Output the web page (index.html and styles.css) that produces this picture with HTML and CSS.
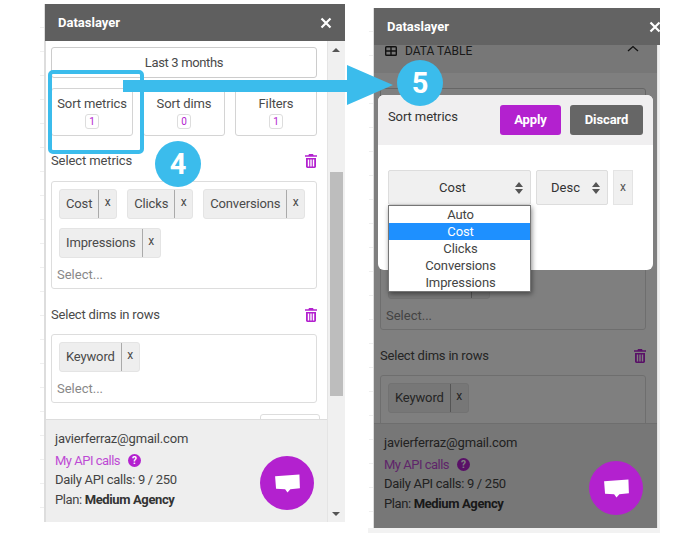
FILE: index.html
```html
<!DOCTYPE html>
<html lang="en">
<head>
<meta charset="utf-8">
<title>Dataslayer sort metrics</title>
<link rel="stylesheet" href="styles.css">
</head>
<body>
<div class="canvas">
  <div class="edge edge-left"></div>
  <div class="edge edge-right"></div>
  <div class="floor"></div>

  <section class="win win-left">
    <header class="win-head"><span class="win-title">Dataslayer</span>
      <svg class="close" viewBox="0 0 12 12"><path d="M1.5 1.5l9 9M10.5 1.5l-9 9"/></svg></header>
    <div class="win-body">
      <div class="main">
        <div class="scroll-area">
          <div class="content">
            <div class="date">Last 3 months</div>
            <div class="cards">
              <div class="card"><span>Sort metrics</span><b class="badge">1</b></div>
              <div class="card"><span>Sort dims</span><b class="badge">0</b></div>
              <div class="card"><span>Filters</span><b class="badge">1</b></div>
            </div>
            <div class="label-row"><span>Select metrics</span>
              <svg class="trash" viewBox="0 0 12 14"><path d="M4 0h4l.6 1.2H12v1.6H0V1.2h3.4zM1 4h10v8.6c0 .8-.6 1.4-1.4 1.4H2.4C1.600 14 1 13.400 1 12.600zm1.800 1.600v6.800h1.400V5.600zm2.500 0v6.800h1.400V5.600zm2.500 0v6.800h1.400V5.600z"/></svg></div>
            <div class="box">
              <div class="chips">
                <div class="chip"><span>Cost</span><i>x</i></div>
                <div class="chip"><span>Clicks</span><i>x</i></div>
                <div class="chip"><span>Conversions</span><i>x</i></div>
                <div class="chip"><span>Impressions</span><i>x</i></div>
              </div>
              <div class="placeholder">Select...</div>
            </div>
            <div class="label-row second"><span>Select dims in rows</span>
              <svg class="trash" viewBox="0 0 12 14"><path d="M4 0h4l.6 1.2H12v1.6H0V1.2h3.4zM1 4h10v8.6c0 .8-.6 1.4-1.4 1.4H2.4C1.600 14 1 13.400 1 12.600zm1.800 1.600v6.800h1.400V5.600zm2.500 0v6.800h1.400V5.600zm2.500 0v6.800h1.400V5.600z"/></svg></div>
            <div class="box">
              <div class="chips">
                <div class="chip"><span>Keyword</span><i>x</i></div>
              </div>
              <div class="placeholder">Select...</div>
            </div>
            <div class="more"><div class="more-btn"></div></div>
          </div>
        </div>
        <footer class="foot">
          <div class="mail">javierferraz@gmail.com</div>
          <div class="api"><span>My API calls</span><b class="help">?</b></div>
          <div class="daily">Daily API calls: 9 / 250</div>
          <div class="plan">Plan: <strong>Medium Agency</strong></div>
          <div class="chat"><svg viewBox="0 0 28 22"><path d="M1 3.500L26.500 1.500 27 16 17 17 14 20.500 11.500 17 2 16.500z"/></svg></div>
        </footer>
      </div>
      <div class="scrollbar">
        <span class="arrow-up"></span>
        <div class="thumb"></div>
        <span class="arrow-down"></span>
      </div>
    </div>
  </section>

  <section class="win win-right">
    <header class="win-head"><span class="win-title">Dataslayer</span>
      <svg class="close" viewBox="0 0 12 12"><path d="M1.5 1.5l9 9M10.500 1.500l-9 9"/></svg></header>
    <div class="win-body">
      <div class="main">
        <div class="scroll-area">
          <div class="table-row">
            <svg class="table-icon" viewBox="0 0 12 10"><path d="M1.500 0h9A1.500 1.500 0 0 1 12 1.500v7A1.500 1.500 0 0 1 10.500 10h-9A1.500 1.500 0 0 1 0 8.500v-7A1.500 1.500 0 0 1 1.500 0zM1.400 1.400v2.900h3.900V1.400zm5.300 0v2.900h3.900V1.400zM1.400 5.700v2.900h3.900V5.700zm5.300 0v2.900h3.900V5.700z"/></svg>
            <span>DATA TABLE</span>
            <svg class="chev" viewBox="0 0 12 7"><path d="M1 6l5-4.500L11 6"/></svg>
          </div>
          <div class="content">
            <div class="date">Last 3 months</div>
            <div class="cards">
              <div class="card"><span>Sort metrics</span><b class="badge">1</b></div>
              <div class="card"><span>Sort dims</span><b class="badge">0</b></div>
              <div class="card"><span>Filters</span><b class="badge">1</b></div>
            </div>
            <div class="label-row"><span>Select metrics</span>
              <svg class="trash" viewBox="0 0 12 14"><path d="M4 0h4l.6 1.2H12v1.6H0V1.2h3.4zM1 4h10v8.6c0 .8-.6 1.4-1.4 1.4H2.400C1.600 14 1 13.400 1 12.600zm1.800 1.600v6.800h1.400V5.600zm2.500 0v6.800h1.400V5.600zm2.500 0v6.800h1.400V5.600z"/></svg></div>
            <div class="box">
              <div class="chips">
                <div class="chip"><span>Cost</span><i>x</i></div>
                <div class="chip"><span>Clicks</span><i>x</i></div>
                <div class="chip"><span>Conversions</span><i>x</i></div>
                <div class="chip"><span>Impressions</span><i>x</i></div>
              </div>
              <div class="placeholder">Select...</div>
            </div>
            <div class="label-row second"><span>Select dims in rows</span>
              <svg class="trash" viewBox="0 0 12 14"><path d="M4 0h4l.6 1.2H12v1.6H0V1.2h3.4zM1 4h10v8.6c0 .8-.6 1.4-1.4 1.4H2.400C1.600 14 1 13.400 1 12.600zm1.800 1.600v6.800h1.400V5.600zm2.500 0v6.800h1.400V5.600zm2.500 0v6.800h1.400V5.600z"/></svg></div>
            <div class="box">
              <div class="chips">
                <div class="chip"><span>Keyword</span><i>x</i></div>
              </div>
              <div class="placeholder">Select...</div>
            </div>
          </div>
        </div>
        <footer class="foot">
          <div class="mail">javierferraz@gmail.com</div>
          <div class="api"><span>My API calls</span><b class="help">?</b></div>
          <div class="daily">Daily API calls: 9 / 250</div>
          <div class="plan">Plan: <strong>Medium Agency</strong></div>
          <div class="chat"><svg viewBox="0 0 28 22"><path d="M1 3.500L26.500 1.500 27 16 17 17 14 20.500 11.500 17 2 16.500z"/></svg></div>
        </footer>
        <div class="dim"></div>
      </div>
      <div class="scrollbar"></div>
    </div>

    <div class="modal">
      <div class="modal-head">
        <span class="modal-title">Sort metrics</span>
        <div class="modal-actions">
          <span class="btn btn-apply">Apply</span>
          <span class="btn btn-discard">Discard</span>
        </div>
      </div>
      <div class="sort-row">
        <div class="sel sel-metric"><span>Cost</span>
          <svg class="updown" viewBox="0 0 8 12"><path d="M4 0l4 5H0zM0 7h8l-4 5z"/></svg></div>
        <div class="sel sel-order"><span>Desc</span>
          <svg class="updown" viewBox="0 0 8 12"><path d="M4 0l4 5H0zM0 7h8l-4 5z"/></svg></div>
        <div class="sel-x">x</div>
      </div>
      <ul class="menu">
        <li>Auto</li>
        <li class="active">Cost</li>
        <li>Clicks</li>
        <li>Conversions</li>
        <li>Impressions</li>
      </ul>
    </div>
  </section>

  <div class="highlight"></div>
  <svg class="pointer" viewBox="0 0 270 40"><path d="M0 15H224V0L270 20 224 40V27H0z"/></svg>
  <div class="step step-4">4</div>
  <div class="step step-5">5</div>
</div>
</body>
</html>
```
FILE: styles.css
```css
* { box-sizing: border-box; }
html, body { margin: 0; padding: 0; background: #fff; }
body { font-family: Roboto, "Liberation Sans", sans-serif; font-size: 13px; color: #4a4a4a; }
.canvas { position: relative; width: 700px; height: 533px; overflow: hidden; }

.edge { position: absolute; width: 5px; border-right: 1px solid #ddd;
  background: repeating-linear-gradient(to bottom, transparent 0 23px, #efefef 23px 24px); }
.edge-left { left: 40px; top: 4px; height: 518px; }
.edge-right { left: 369px; top: 8px; height: 520px; }
.floor { position: absolute; left: 368px; top: 528px; width: 292px; height: 5px; background: #f2f2f2; }

.win { position: absolute; overflow: hidden; display: flex; flex-direction: column; background: #fff; }
.win-left { left: 45px; top: 4px; width: 300px; height: 518px; }
.win-right { left: 374px; top: 8px; width: 286px; height: 520px; }
.win-head { flex: none; width: 300px; height: 37px; display: flex; align-items: center; justify-content: space-between;
  padding: 0 13px; background: #5f5f5f; color: #fff; position: relative; z-index: 3; }
.win-right .win-head { background: #636363; }
.win-title { font-weight: 700; font-size: 13px; }
.close { width: 12px; height: 12px; fill: none; stroke: #fff; stroke-width: 2.2; }

.win-body { flex: 1; min-height: 0; display: flex; }
.main { flex: none; width: 282px; display: flex; flex-direction: column; position: relative; border-left: 1px solid #ddd; }
.win-right .main { width: 283px; border-left: 0; }
.scroll-area { flex: 1; min-height: 0; overflow: hidden; }
.content { padding: 6px 10px 0 5px; }
.win-right .content { padding: 15px 11px 0 6px; }

.date { height: 31px; border: 1px solid #ccc; border-radius: 3px; display: flex; align-items: center; justify-content: center; letter-spacing: -.35px; }
.cards { display: grid; grid-template-columns: repeat(3, 1fr); gap: 10px; margin-top: 10px; }
.card { height: 48px; border: 1px solid #d4d4d4; border-radius: 3px; display: flex; flex-direction: column; align-items: center; padding-top: 7px; gap: 3px; letter-spacing: -.12px; }
.badge { width: 14px; height: 15px; border: 1px solid #ddd; border-radius: 3px; font-size: 10px; font-weight: 400; line-height: 13px; text-align: center; color: #b321cf; }

.label-row { display: flex; align-items: center; justify-content: space-between; height: 20px; margin: 14px 0 11px; letter-spacing: -.1px; }
.label-row.second { margin: 15px 0 10px; letter-spacing: -.2px; }
.trash { width: 12px; height: 14px; fill: #b321cf; margin-top: 1px; }

.box { border: 1px solid #ddd; border-radius: 3px; padding: 7px 7px 6px 5px; }
.chips { display: flex; flex-wrap: wrap; gap: 9px 10px; padding-left: 2px; }
.chip { height: 30px; display: flex; align-items: stretch; background: #eee; border: 1px solid #e4e4e4; border-radius: 3px; }
.chip span { padding: 0 6px; line-height: 28px; border-right: 1px solid #aaa; letter-spacing: -.15px; }
.chip i { width: 17px; font-style: normal; text-align: center; line-height: 24px; font-size: 12px; }
.placeholder { margin-top: 9px; height: 15px; line-height: 15px; color: #888; }
.more { display: flex; justify-content: flex-end; margin: 11px -3px 0 0; }
.more-btn { width: 60px; height: 30px; border: 1px solid #ddd; border-radius: 3px; }

.foot { flex: none; height: 103px; padding-top: 9px; padding-left: 9px; background: #eee; border-top: 1px solid #ddd; line-height: 19.5px; position: relative; color: #444; }
.win-right .foot { height: 105px; padding-left: 10px; }
.mail { margin-bottom: 2px; letter-spacing: -.18px; }
.daily { letter-spacing: -.3px; }
.plan { letter-spacing: -.38px; }
.api { display: flex; align-items: center; gap: 8px; color: #b321cf; letter-spacing: -.5px; }
.api span { opacity: .8; }
.help { width: 13px; height: 13px; border-radius: 50%; background: #b321cf; color: #fff; font-size: 10px; line-height: 13px; text-align: center; letter-spacing: 0; }
.foot strong { color: #333; }
.chat { position: absolute; left: 214px; top: 36px; width: 54px; height: 54px; border-radius: 50%; background: #b321cf; display: flex; align-items: center; justify-content: center; z-index: 2; }
.win-right .chat { left: 215px; top: 37px; }
.chat svg { width: 27px; height: 21px; fill: #fff; }

.scrollbar { flex: none; width: 18px; background: #f0f0f0; border-left: 1px solid #e4e4e4; position: relative; }
.thumb { position: absolute; left: 2px; top: 131px; width: 13px; height: 224px; background: #bdbdbd; }
.arrow-up, .arrow-down { position: absolute; left: 4px; width: 0; height: 0; border-left: 4px solid transparent; border-right: 4px solid transparent; }
.arrow-up { top: 7px; border-bottom: 4px solid #555; }
.arrow-down { bottom: 6px; border-top: 4px solid #555; }

.table-row { height: 28px; background: #eee; display: flex; align-items: flex-start; padding: 0 18px 0 11px; font-size: 12px; color: #333; line-height: 12px; }
.table-icon { width: 12px; height: 10px; fill: #222; margin: 1px 8px 0 0; }
.chev { width: 12px; height: 7px; fill: none; stroke: #222; stroke-width: 1.300; margin-left: auto; }

.dim { position: absolute; inset: 0; background: rgba(0, 0, 0, .5); z-index: 1; }

.modal { position: absolute; left: 4px; top: 87px; width: 275px; height: 175px; background: #fff; border-radius: 6px; z-index: 2; }
.modal-head { height: 50px; padding: 10px 10px 10px; background: #f0eff0; border-radius: 6px 6px 0 0; display: flex; justify-content: space-between; align-items: flex-start; }
.modal-title { margin-top: 4px; color: #333; letter-spacing: -.1px; }
.modal-actions { display: flex; gap: 9px; }
.btn { height: 30px; border-radius: 3px; color: #fff; font-weight: 700; line-height: 30px; text-align: center; letter-spacing: -.1px; }
.btn-apply { width: 61px; background: #b321cf; }
.btn-discard { width: 73px; background: #666; }
.sort-row { display: flex; gap: 5px; padding: 25px 0 0 10px; }
.sel { height: 35px; background: #f0f0f0; border: 1px solid #ddd; border-radius: 2px; display: flex; align-items: center; justify-content: space-between; color: #333; }
.sel-metric { width: 143px; padding: 0 7px 0 50px; }
.sel-order { width: 72px; padding: 0 7px 0 14px; }
.sel-x { width: 20px; height: 35px; background: #f0f0f0; border: 1px solid #e4e4e4; text-align: center; line-height: 33px; font-size: 12px; color: #555; }
.updown { width: 8px; height: 12px; fill: #555; }
.menu { position: absolute; left: 10px; top: 110px; width: 143px; margin: 0; padding: 0 0 0 2px; list-style: none; background: #fff; border: 1px solid #767676; box-shadow: 1px 2px 5px rgba(0, 0, 0, .45); z-index: 3; color: #444; }
.menu li { height: 17px; line-height: 17px; text-align: center; margin-left: -2px; padding-left: 2px; letter-spacing: -.1px; }
.menu li.active { background: #1e90ff; color: #fff; }

.highlight { position: absolute; left: 48px; top: 70px; width: 96px; height: 84px; border: 4px solid #3bbcec; border-radius: 5px; z-index: 4; }
.pointer { position: absolute; left: 123px; top: 65px; width: 270px; height: 40px; fill: #3bbcec; z-index: 4; }
.step { position: absolute; width: 46px; height: 46px; border-radius: 50%; background: #3bbcec; color: #fff; font-size: 29px; font-weight: 700; line-height: 46px; text-align: center; z-index: 5; }
.step-4 { left: 155px; top: 141px; }
.step-5 { left: 397px; top: 60px; }
```
